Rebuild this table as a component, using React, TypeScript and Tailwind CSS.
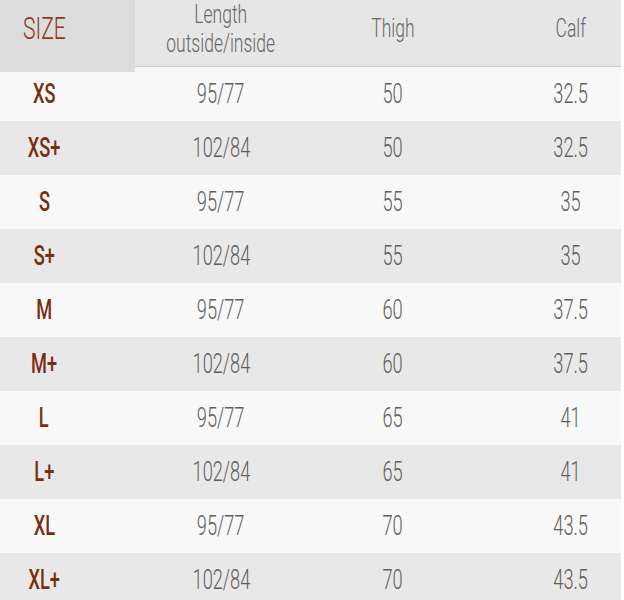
const rows = [
  ['XS', '95/77', '50', '32.5'],
  ['XS+', '102/84', '50', '32.5'],
  ['S', '95/77', '55', '35'],
  ['S+', '102/84', '55', '35'],
  ['M', '95/77', '60', '37.5'],
  ['M+', '102/84', '60', '37.5'],
  ['L', '95/77', '65', '41'],
  ['L+', '102/84', '65', '41'],
  ['XL', '95/77', '70', '43.5'],
  ['XL+', '102/84', '70', '43.5'],
];

// condensed look: Roboto squeezed horizontally
function Narrow({ children, className = 'scale-x-[0.65]' }: { children: React.ReactNode; className?: string }) {
  return <span className={`inline-block origin-center whitespace-nowrap ${className}`}>{children}</span>;
}

export default function App() {
  return (
    <div className="w-[624px] h-[600px] overflow-hidden bg-white font-['Roboto',sans-serif]">
      <div className="w-[621px]">
        <div className="grid grid-cols-[135px_172px_172px_142px] h-[67px] bg-[#e6e6e6] border-b border-[#c9c9c9] text-[#666] text-[25px] leading-[29px] font-light">
          <div className="flex items-center justify-center pr-[47px] pb-[16px] text-[31px] text-[#8e3b1d] bg-[#dcdcdc]">
            <Narrow className="scale-x-[0.68]">SIZE</Narrow>
          </div>
          <div className="flex flex-col items-center justify-center text-center pb-[14px]">
            <Narrow className="scale-x-[0.7]">Length</Narrow>
            <Narrow className="scale-x-[0.7]">outside/inside</Narrow>
          </div>
          <div className="flex items-center justify-center pb-[16px]">
            <Narrow className="scale-x-[0.7]">Thigh</Narrow>
          </div>
          <div className="flex items-center justify-center pb-[16px] pl-[42px]">
            <Narrow className="scale-x-[0.7]">Calf</Narrow>
          </div>
        </div>
        {rows.map((r, i) => (
          <div
            key={r[0]}
            className={`grid grid-cols-[135px_172px_172px_142px] h-[54px] items-center text-[28px] font-light text-[#5f5f5f] ${i % 2 === 0 ? 'bg-[#f8f8f8]' : 'bg-[#e8e8e8]'}`}
          >
            <div className="text-center pr-[47px] text-[#7a2e10] font-medium">
              <Narrow>{r[0]}</Narrow>
            </div>
            <div className="text-center">
              <Narrow>{r[1]}</Narrow>
            </div>
            <div className="text-center">
              <Narrow>{r[2]}</Narrow>
            </div>
            <div className="text-center pl-[42px]">
              <Narrow>{r[3]}</Narrow>
            </div>
          </div>
        ))}
      </div>
    </div>
  );
}
